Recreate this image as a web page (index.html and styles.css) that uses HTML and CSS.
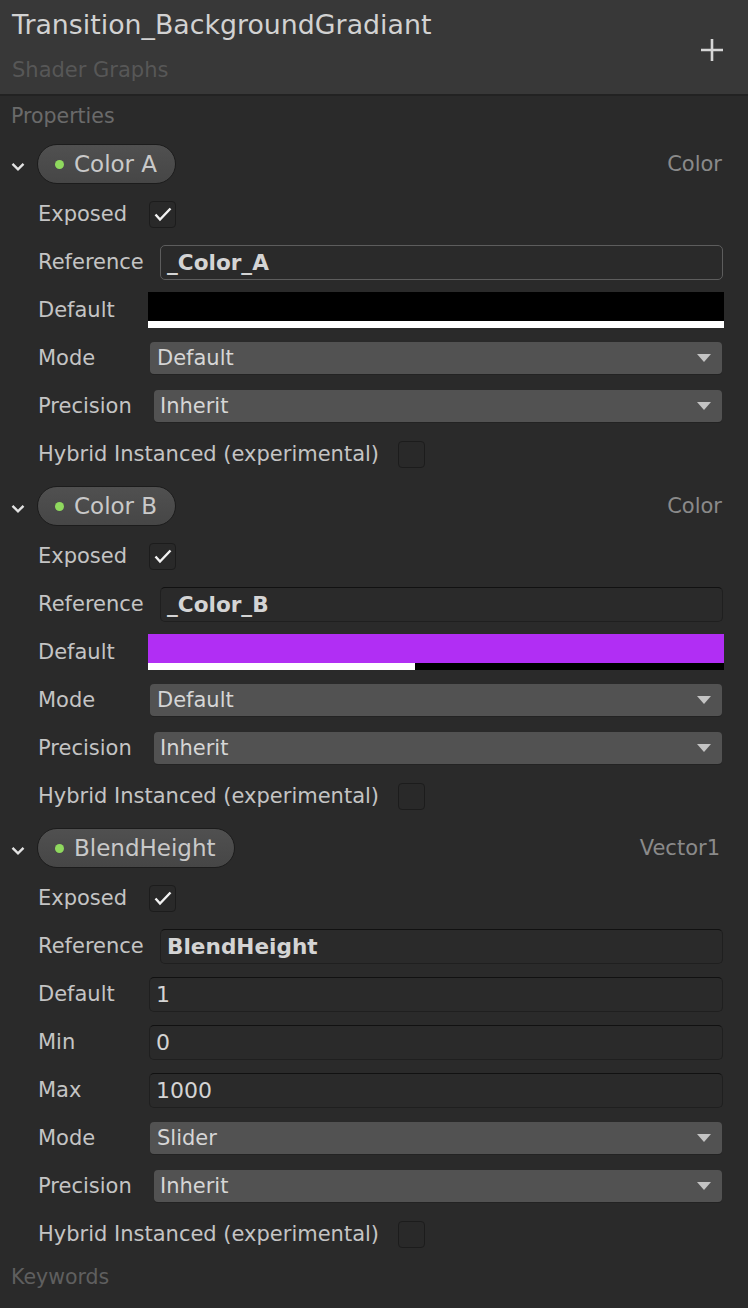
FILE: index.html
```html
<!DOCTYPE html>
<html>
<head>
<meta charset="utf-8">
<link rel="stylesheet" href="styles.css">
</head>
<body>
<div class="panel">
  <header class="header">
    <div class="titles">
      <div class="title">Transition_BackgroundGradiant</div>
      <div class="subtitle">Shader Graphs</div>
    </div>
    <svg class="plus" width="24" height="24" viewBox="0 0 24 24"><path d="M12 1V23M1 12H23" stroke="#d6d6d6" stroke-width="2.6" fill="none"/></svg>
  </header>

  <div class="section-title props-title">Properties</div>

  <div class="props">
    <!-- Color A -->
    <div class="block">
      <div class="pill-row">
        <svg class="chev" width="14" height="10" viewBox="0 0 14 10"><polyline points="1.5,1.8 7,7.3 12.5,1.8" fill="none" stroke="#e2e2e2" stroke-width="2.4"/></svg>
        <div class="pill"><span class="dot"></span><span class="pill-text">Color A</span></div>
        <span class="type">Color</span>
      </div>
      <div class="fields">
        <div class="row"><span class="label">Exposed</span>
          <span class="checkbox cb-exposed"><svg width="28" height="28" viewBox="0 0 28 28"><polyline points="6.5,14.5 11,19.5 21.5,8.5" fill="none" stroke="#f2f2f2" stroke-width="2.4"/></svg></span></div>
        <div class="row"><span class="label">Reference</span><div class="input ref focus">_Color_A</div></div>
        <div class="row"><span class="label">Default</span><div class="color"><div class="swatch black"></div><div class="alpha"><div class="alpha-fill" style="width:100%"></div></div></div></div>
        <div class="row"><span class="label">Mode</span><div class="dropdown mode"><span>Default</span><span class="arrow"></span></div></div>
        <div class="row"><span class="label">Precision</span><div class="dropdown prec"><span>Inherit</span><span class="arrow"></span></div></div>
        <div class="row"><span class="label">Hybrid Instanced (experimental)</span><span class="checkbox cb-hybrid"></span></div>
      </div>
    </div>

    <!-- Color B -->
    <div class="block">
      <div class="pill-row">
        <svg class="chev" width="14" height="10" viewBox="0 0 14 10"><polyline points="1.5,1.8 7,7.3 12.5,1.8" fill="none" stroke="#e2e2e2" stroke-width="2.4"/></svg>
        <div class="pill"><span class="dot"></span><span class="pill-text">Color B</span></div>
        <span class="type">Color</span>
      </div>
      <div class="fields">
        <div class="row"><span class="label">Exposed</span>
          <span class="checkbox cb-exposed"><svg width="28" height="28" viewBox="0 0 28 28"><polyline points="6.5,14.5 11,19.5 21.5,8.5" fill="none" stroke="#f2f2f2" stroke-width="2.4"/></svg></span></div>
        <div class="row"><span class="label">Reference</span><div class="input ref">_Color_B</div></div>
        <div class="row"><span class="label">Default</span><div class="color"><div class="swatch purple"></div><div class="alpha"><div class="alpha-fill" style="width:46.4%"></div></div></div></div>
        <div class="row"><span class="label">Mode</span><div class="dropdown mode"><span>Default</span><span class="arrow"></span></div></div>
        <div class="row"><span class="label">Precision</span><div class="dropdown prec"><span>Inherit</span><span class="arrow"></span></div></div>
        <div class="row"><span class="label">Hybrid Instanced (experimental)</span><span class="checkbox cb-hybrid"></span></div>
      </div>
    </div>

    <!-- BlendHeight -->
    <div class="block">
      <div class="pill-row">
        <svg class="chev" width="14" height="10" viewBox="0 0 14 10"><polyline points="1.5,1.8 7,7.3 12.5,1.8" fill="none" stroke="#e2e2e2" stroke-width="2.4"/></svg>
        <div class="pill"><span class="dot"></span><span class="pill-text">BlendHeight</span></div>
        <span class="type vec">Vector1</span>
      </div>
      <div class="fields">
        <div class="row"><span class="label">Exposed</span>
          <span class="checkbox cb-exposed"><svg width="28" height="28" viewBox="0 0 28 28"><polyline points="6.5,14.5 11,19.5 21.5,8.5" fill="none" stroke="#f2f2f2" stroke-width="2.4"/></svg></span></div>
        <div class="row"><span class="label">Reference</span><div class="input ref">BlendHeight</div></div>
        <div class="row"><span class="label">Default</span><div class="input num">1</div></div>
        <div class="row"><span class="label">Min</span><div class="input num">0</div></div>
        <div class="row"><span class="label">Max</span><div class="input num">1000</div></div>
        <div class="row"><span class="label">Mode</span><div class="dropdown mode"><span>Slider</span><span class="arrow"></span></div></div>
        <div class="row"><span class="label">Precision</span><div class="dropdown prec"><span>Inherit</span><span class="arrow"></span></div></div>
        <div class="row"><span class="label">Hybrid Instanced (experimental)</span><span class="checkbox cb-hybrid"></span></div>
      </div>
    </div>
  </div>

  <div class="section-title keywords-title">Keywords</div>
</div>
</body>
</html>
```

FILE: styles.css
```css
* { box-sizing: border-box; }

html, body {
  margin: 0;
  padding: 0;
  background: #2a2a2a;
}

body {
  font-family: "DejaVu Sans", "Liberation Sans", sans-serif;
  color: #c4c4c4;
  width: 748px;
  height: 1308px;
  overflow: hidden;
}

.panel {
  display: flex;
  flex-direction: column;
}

.header {
  height: 96px;
  background: #383838;
  border-bottom: 2px solid #222222;
  display: flex;
  justify-content: space-between;
  padding: 0 24px 0 12px;
}

.titles {
  display: flex;
  flex-direction: column;
}

.title {
  font-size: 26.8px;
  line-height: 32px;
  margin-top: 9px;
  color: #d2d2d2;
  white-space: nowrap;
}

.subtitle {
  font-size: 21px;
  line-height: 24px;
  margin-top: 17px;
  color: #575757;
}

.plus {
  align-self: center;
  margin-top: 5px;
}

.section-title {
  font-size: 20.5px;
  line-height: 24px;
  padding-left: 11px;
  color: #6a6a6a;
}

.props-title { padding-top: 8px; }
.keywords-title { padding-top: 7px; color: #5f5f5f; }

.props {
  display: flex;
  flex-direction: column;
  gap: 8px;
  padding-top: 16px;
}

.block {
  display: flex;
  flex-direction: column;
}

.pill-row {
  height: 40px;
  display: flex;
  align-items: center;
  padding: 0 26px 0 11px;
}

.chev {
  margin-top: 6px;
  flex-shrink: 0;
}

.pill {
  margin-left: 12px;
  height: 40px;
  border-radius: 20px;
  background: linear-gradient(#505050, #464646);
  border: 1.5px solid #1c1c1c;
  display: flex;
  align-items: center;
  padding: 0 18px 0 17px;
}

.dot {
  width: 9px;
  height: 9px;
  border-radius: 50%;
  background: #8fd95e;
  margin-right: 10px;
  margin-top: 1px;
}

.pill-text {
  font-size: 23px;
  color: #c9c9c9;
}

.type {
  margin-left: auto;
  font-size: 21px;
  color: #8a8a8a;
}

.type.vec { margin-right: 2px; }

.fields {
  display: flex;
  flex-direction: column;
  margin-top: 6px;
}

.row {
  height: 48px;
  display: flex;
  align-items: center;
  padding: 0 25px 0 38px;
}

.label {
  font-size: 21px;
  min-width: 110px;
  white-space: nowrap;
  color: #c4c4c4;
  flex-shrink: 0;
}

.checkbox {
  width: 27px;
  height: 27px;
  border: 1.5px solid #1c1c1c;
  border-radius: 4px;
  background: #292929;
  display: flex;
  align-items: center;
  justify-content: center;
  overflow: hidden;
}

.checkbox svg { flex-shrink: 0; }

.cb-exposed { margin-left: 1px; }
.cb-hybrid { margin-left: 19px; }

.input {
  flex: 1;
  height: 35px;
  border-radius: 5px;
  background: #2a2a2a;
  border: 1.5px solid #1f1f1f;
  border-top-color: #111111;
  display: flex;
  align-items: center;
  font-size: 21px;
  color: #d4d4d4;
  padding-left: 6px;
}

.input.ref {
  margin-left: 12px;
  font-weight: bold;
  font-size: 21.6px;
}

.input.ref.focus {
  border: 1.5px solid #5d5d5d;
}

.input.num {
  margin-left: 1px;
  font-size: 22px;
}

.color {
  flex: 1;
  height: 36px;
  display: flex;
  flex-direction: column;
  margin-right: -1px;
}

.swatch { height: 29px; }
.swatch.black { background: #000000; }
.swatch.purple { background: #b12ef4; }

.alpha {
  height: 7px;
  background: #000000;
}

.alpha-fill {
  height: 100%;
  background: #ffffff;
}

.dropdown {
  flex: 1;
  height: 32px;
  border-radius: 4px;
  background: #525252;
  display: flex;
  align-items: center;
  justify-content: space-between;
  font-size: 21px;
  color: #d6d6d6;
  margin-right: 1px;
  padding-right: 11px;
  box-shadow: 0 1px 0 #232323;
}

.dropdown.mode { margin-left: 2px; padding-left: 7px; }
.dropdown.prec { margin-left: 6px; padding-left: 6px; }

.arrow {
  width: 0;
  height: 0;
  border-left: 7px solid transparent;
  border-right: 7px solid transparent;
  border-top: 8px solid #c4c4c4;
}
```
